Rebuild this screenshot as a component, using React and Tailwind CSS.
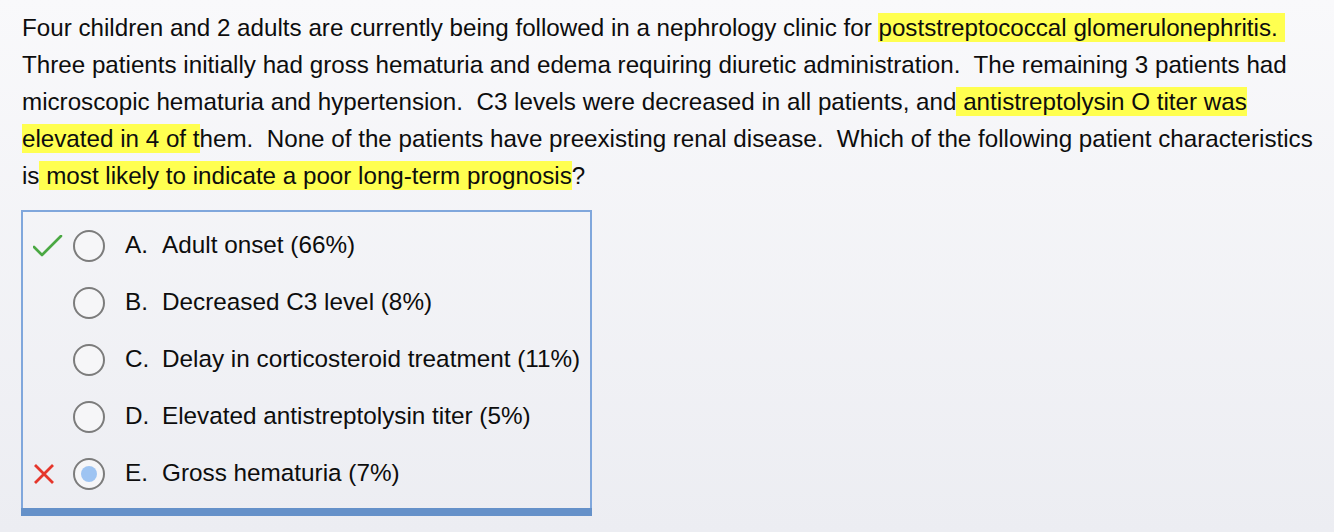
import React from "react";

const HL = ({ children }) => (
  <span className="bg-[#ffff50] py-[1px]">{children}</span>
);

const Check = () => (
  <svg width="30" height="22" viewBox="0 0 30 22" className="block">
    <polyline points="1,12 9,20 28,1" fill="none" stroke="#4aa843" strokeWidth="2.6" strokeLinecap="round" strokeLinejoin="round" />
  </svg>
);

const Cross = () => (
  <svg width="22" height="20" viewBox="0 0 22 20" className="block">
    <path d="M2 1 L20 19 M20 1 L2 19" fill="none" stroke="#e5362b" strokeWidth="2.8" strokeLinecap="butt" />
  </svg>
);

const options = [
  { l: "A.", t: "Adult onset (66%)", mark: "check" },
  { l: "B.", t: "Decreased C3 level (8%)" },
  { l: "C.", t: "Delay in corticosteroid treatment (11%)" },
  { l: "D.", t: "Elevated antistreptolysin titer (5%)" },
  { l: "E.", t: "Gross hematuria (7%)", mark: "cross", selected: true },
];

export default function App() {
  const sp = "\u00a0 ";
  return (
    <div className="w-[1334px] h-[532px] overflow-hidden bg-gradient-to-b from-[#f9f9fb] to-[#ecedf2] text-[#0d0d0d] font-['Liberation_Sans',Arial,sans-serif]">
      <div className="pl-[22px] pt-[9px] text-[24.2px] leading-[37px] whitespace-nowrap">
        Four children and 2 adults are currently being followed in a nephrology clinic for{" "}
        <HL>poststreptococcal glomerulonephritis.{"\u00a0"}</HL>
        <br />
        Three patients initially had gross hematuria and edema requiring diuretic administration.{sp}The remaining 3 patients had
        <br />
        microscopic hematuria and hypertension.{sp}C3 levels were decreased in all patients, and
        <HL> antistreptolysin O titer was</HL>
        <br />
        <HL>elevated in 4 of t</HL>hem.{sp}None of the patients have preexisting renal disease.{sp}Which of the following patient characteristics
        <br />
        is<HL> most likely to indicate a poor long-term prognosis</HL>?
      </div>

      <div className="ml-[21px] mt-[16px] w-[571px] border-2 border-b-0 border-[#80a7dc]">
        <div className="pt-[5px] pb-[6px]">
          {options.map((o) => (
            <div key={o.l} className="h-[57px] flex items-center pl-[10px]">
              <div className="w-[40px] flex items-center">
                {o.mark === "check" && <Check />}
                {o.mark === "cross" && <Cross />}
              </div>
              <div className="w-[32px] h-[32px] rounded-full border-2 border-[#7c7c7c] bg-[#f6f6f8] flex items-center justify-center">
                {o.selected && <div className="w-[16px] h-[16px] rounded-full bg-[#9ec4f2]" />}
              </div>
              <div className="ml-[20px] flex text-[24.3px]">
                <span className="w-[37px]">{o.l}</span>
                <span>{o.t}</span>
              </div>
            </div>
          ))}
        </div>
        <div className="h-[8px] bg-[#6591c9] -mx-[2px]" />
      </div>
    </div>
  );
}
